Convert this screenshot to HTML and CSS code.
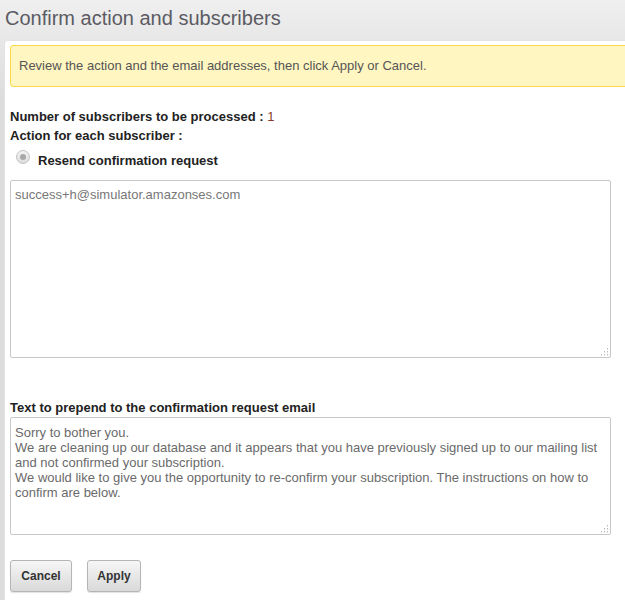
FILE: index.html
```html
<!DOCTYPE html>
<html>
<head>
<meta charset="utf-8">
<link rel="stylesheet" href="styles.css">
</head>
<body>
<div class="page">
  <h1 class="title">Confirm action and subscribers</h1>
  <div class="panel">
    <div class="notice">Review the action and the email addresses, then click Apply or Cancel.</div>
    <div class="info">
      <div class="line">Number of subscribers to be processed : <span class="num">1</span></div>
      <div class="line">Action for each subscriber :</div>
      <label class="radio-row"><span class="radio"><span class="dot"></span></span><span class="radio-label">Resend confirmation request</span></label>
    </div>
    <div class="ta-wrap ta-emails-wrap">
      <textarea class="ta ta-emails" readonly>success+h@simulator.amazonses.com</textarea>
      <svg class="grip" width="9" height="9" viewBox="0 0 9 9"><g fill="#b8b8b8"><rect x="7" y="1" width="1" height="1"/><rect x="4" y="4" width="1" height="1"/><rect x="7" y="4" width="1" height="1"/><rect x="1" y="7" width="1" height="1"/><rect x="4" y="7" width="1" height="1"/><rect x="7" y="7" width="1" height="1"/></g><g fill="#e0e0e0"><rect x="7" y="2" width="1" height="1"/><rect x="4" y="5" width="1" height="1"/><rect x="7" y="5" width="1" height="1"/><rect x="1" y="8" width="1" height="1"/><rect x="4" y="8" width="1" height="1"/><rect x="7" y="8" width="1" height="1"/></g></svg>
    </div>
    <div class="label">Text to prepend to the confirmation request email</div>
    <div class="ta-wrap ta-text-wrap">
      <textarea class="ta ta-text">Sorry to bother you.
We are cleaning up our database and it appears that you have previously signed up to our mailing list and not confirmed your subscription.
We would like to give you the opportunity to re-confirm your subscription. The instructions on how to confirm are below.</textarea>
      <svg class="grip" width="9" height="9" viewBox="0 0 9 9"><g fill="#b8b8b8"><rect x="7" y="1" width="1" height="1"/><rect x="4" y="4" width="1" height="1"/><rect x="7" y="4" width="1" height="1"/><rect x="1" y="7" width="1" height="1"/><rect x="4" y="7" width="1" height="1"/><rect x="7" y="7" width="1" height="1"/></g><g fill="#e0e0e0"><rect x="7" y="2" width="1" height="1"/><rect x="4" y="5" width="1" height="1"/><rect x="7" y="5" width="1" height="1"/><rect x="1" y="8" width="1" height="1"/><rect x="4" y="8" width="1" height="1"/><rect x="7" y="8" width="1" height="1"/></g></svg>
    </div>
    <div class="buttons">
      <button class="btn btn-cancel">Cancel</button>
      <button class="btn btn-apply">Apply</button>
    </div>
  </div>
</div>
</body>
</html>
```
FILE: styles.css
```css
html, body {
  margin: 0;
  padding: 0;
  height: 100%;
}
body {
  background: linear-gradient(#efefef, #dcdcdc 100px, #dcdcdc);
  font-family: "Liberation Sans", Arial, sans-serif;
  overflow: hidden;
}
.title {
  margin: 0;
  padding: 6px 0 0 5px;
  height: 34px;
  box-sizing: border-box;
  font-size: 20px;
  font-weight: normal;
  color: #5b5b63;
  line-height: 24px;
}
.panel {
  margin: 6px 0 0 4px;
  background: #fff;
  border-top-left-radius: 4px;
  border-left: 1px solid #e4e4e4;
  border-top: 1px solid #e4e4e4;
  padding: 4px 0 0 5px;
  height: 560px;
  box-sizing: border-box;
}
.notice {
  background: #fff6c1;
  border: 1px solid #fcd94c;
  border-right: none;
  border-radius: 4px 0 0 4px;
  height: 42px;
  box-sizing: border-box;
  padding: 0 0 0 8px;
  line-height: 40px;
  font-size: 13px;
  color: #555;
}
.info {
  padding: 20px 0 0 0;
}
.line {
  font-size: 13px;
  font-weight: bold;
  color: #222;
  line-height: 19px;
}
.num {
  font-weight: normal;
  color: #8a3a28;
}
.radio-row {
  display: flex;
  align-items: center;
  padding: 5px 0 0 6px;
  height: 20px;
}
.radio {
  width: 12px;
  height: 12px;
  border-radius: 50%;
  border: 1px solid #c3c3c3;
  background: linear-gradient(#f4f4f4, #dcdcdc);
  display: flex;
  align-items: center;
  justify-content: center;
  margin-top: -6px;
}
.dot {
  width: 6px;
  height: 6px;
  border-radius: 50%;
  background: #a9a9a9;
}
.radio-label {
  margin-left: 8px;
  font-size: 13px;
  font-weight: bold;
  color: #222;
}
.ta-wrap {
  position: relative;
  width: 601px;
}
.grip {
  position: absolute;
  right: 2px;
  bottom: 2px;
}
.ta {
  display: block;
  width: 601px;
  margin: 0;
  border: 1px solid #c8c8c8;
  border-radius: 2px;
  padding: 6px 4px;
  box-sizing: border-box;
  font-family: "Liberation Sans", Arial, sans-serif;
  font-size: 13px;
  line-height: 15px;
  color: #6a6a6a;
  background: #fff;
  resize: none;
  outline: none;
}
.ta-emails-wrap {
  margin-top: 10px;
}
.ta-emails {
  height: 178px;
  color: #777;
}
.label {
  margin-top: 42px;
  font-size: 13px;
  font-weight: bold;
  color: #222;
  line-height: 15px;
}
.ta-text-wrap {
  margin-top: 2px;
}
.ta-text {
  height: 118px;
  padding-top: 7px;
}
.buttons {
  display: flex;
  gap: 15px;
  margin-top: 25px;
}
.btn {
  height: 32px;
  border: 1px solid #b5b5b5;
  border-radius: 3px;
  background: linear-gradient(#f6f6f6, #d9d9d9);
  box-shadow: 0 1px 1px rgba(0,0,0,0.12);
  font-family: "Liberation Sans", Arial, sans-serif;
  font-size: 12px;
  font-weight: bold;
  color: #333;
  padding: 0;
}
.btn-cancel {
  width: 62px;
}
.btn-apply {
  width: 54px;
}
```
